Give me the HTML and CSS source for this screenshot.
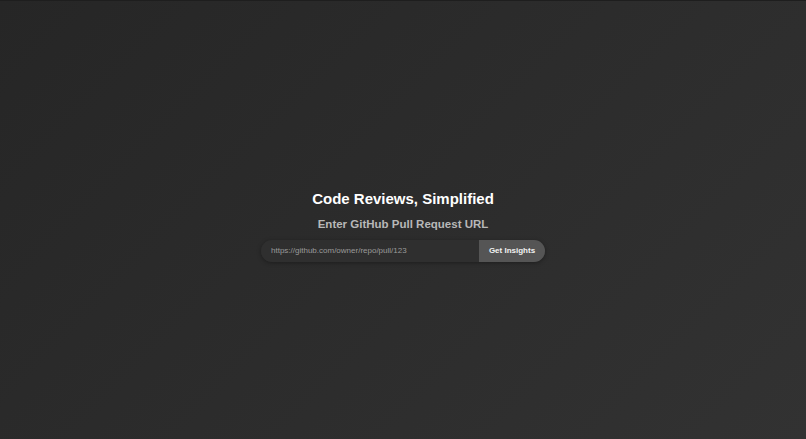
FILE: index.html
```html
<!DOCTYPE html>
<html lang="en">
<head>
<meta charset="utf-8">
<title>Code Reviews, Simplified</title>
<link rel="stylesheet" href="styles.css">
</head>
<body>
<main class="page">
  <section class="hero">
    <h1 class="title">Code Reviews, Simplified</h1>
    <h2 class="subtitle">Enter GitHub Pull Request URL</h2>
    <form class="url-form">
      <input class="url-input" type="text" placeholder="https://github.com/owner/repo/pull/123">
      <button class="url-button" type="button">Get Insights</button>
    </form>
  </section>
</main>
</body>
</html>
```
FILE: styles.css
```css
html, body {
  margin: 0;
  padding: 0;
  height: 100%;
}
body {
  background: linear-gradient(135deg, #262626 0%, #2c2c2c 50%, #323232 100%);
  font-family: "Liberation Sans", Arial, sans-serif;
  border-top: 1px solid #1e1e1e;
  box-sizing: border-box;
}
.page {
  height: 100%;
  box-sizing: border-box;
  padding-top: 11px;
  display: flex;
  align-items: center;
  justify-content: center;
}
.hero {
  display: flex;
  flex-direction: column;
  align-items: center;
}
.title {
  margin: 0;
  font-size: 15px;
  font-weight: bold;
  color: #ffffff;
  line-height: 18px;
}
.subtitle {
  margin: 9px 0 0;
  font-size: 11.5px;
  font-weight: bold;
  color: #b8b8b8;
  line-height: 14px;
}
.url-form {
  margin-top: 9px;
  display: flex;
  width: 284px;
  height: 22px;
  border-radius: 11px;
  overflow: hidden;
  box-shadow: 0 1px 4px rgba(0,0,0,0.35);
}
.url-input {
  flex: 1;
  min-width: 0;
  border: none;
  outline: none;
  background: #2f2f2f;
  color: #ddd;
  padding: 0 10px;
  font-family: "Liberation Sans", Arial, sans-serif;
  font-size: 8px;
}
.url-input::placeholder {
  color: #9a9a9a;
}
.url-button {
  width: 66px;
  border: none;
  background: #555555;
  color: #f2f2f2;
  font-family: "Liberation Sans", Arial, sans-serif;
  font-weight: bold;
  font-size: 8px;
  padding: 0;
}
```
